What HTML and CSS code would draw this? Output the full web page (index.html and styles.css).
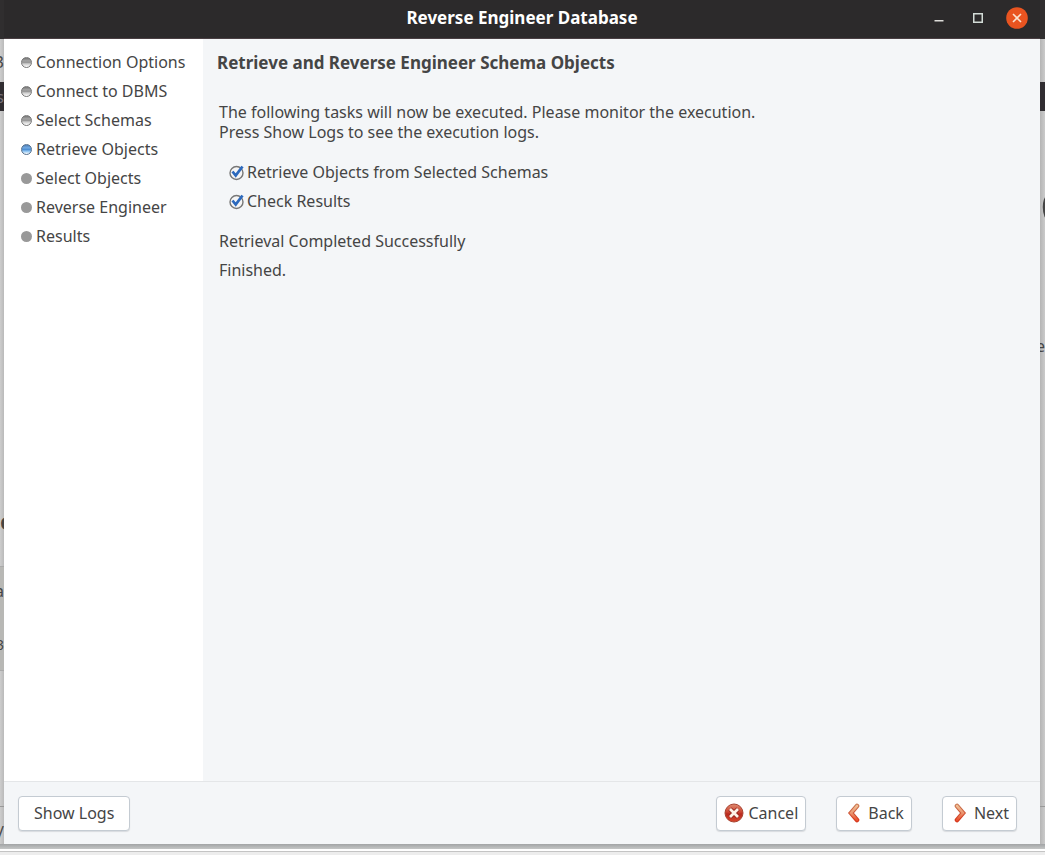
FILE: index.html
```html
<!DOCTYPE html>
<html lang="en">
<head>
    <meta charset="UTF-8">
    <meta name="viewport" content="width=device-width, initial-scale=1.0">
    <title>Reverse Engineer Database</title>
    <link rel="stylesheet" href="styles.css">
</head>
<body>
    <div class="desktop">
        <div class="edge edge-left" aria-hidden="true">
            <span class="edge-text edge-number">3</span>
            <span class="edge-bar">s</span>
            <span class="edge-text edge-heading">c</span>
            <div class="edge-panel">
                <span class="edge-text">a</span>
                <span class="edge-text edge-small">3</span>
            </div>
            <div class="edge-foot">
                <span class="edge-text">/</span>
            </div>
        </div>

        <div class="dialog" role="dialog" aria-labelledby="dialog-title">
            <header class="titlebar">
                <h1 class="title" id="dialog-title">Reverse Engineer Database</h1>
                <div class="window-controls">
                    <button class="control" type="button" aria-label="Minimize">
                        <svg width="22" height="22" viewBox="0 0 22 22"><path d="M6.500 13.750h9" stroke="#deddda" stroke-width="1.500"/></svg>
                    </button>
                    <button class="control" type="button" aria-label="Maximize">
                        <svg width="22" height="22" viewBox="0 0 22 22"><rect x="6.75" y="6.75" width="8.5" height="8.5" fill="none" stroke="#d3dcd7" stroke-width="1.5"/></svg>
                    </button>
                    <button class="control" type="button" aria-label="Close">
                        <svg width="22" height="22" viewBox="0 0 22 22"><circle cx="11" cy="11" r="10.8" fill="#e95420"/><path d="M7 7l8 8M15 7l-8 8" stroke="#fbe3d0" stroke-width="1.6"/></svg>
                    </button>
                </div>
            </header>

            <div class="content">
                <nav class="sidebar">
                    <ol class="steps">
                        <li class="step done">Connection Options</li>
                        <li class="step done">Connect to DBMS</li>
                        <li class="step done">Select Schemas</li>
                        <li class="step current">Retrieve Objects</li>
                        <li class="step">Select Objects</li>
                        <li class="step">Reverse Engineer</li>
                        <li class="step">Results</li>
                    </ol>
                </nav>
                <main class="page">
                    <h2 class="page-title">Retrieve and Reverse Engineer Schema Objects</h2>
                    <div class="page-body">
                        <p class="intro">The following tasks will now be executed. Please monitor the execution.<br>Press Show Logs to see the execution logs.</p>
                        <div class="tasks">
                            <label class="task">
                                <input class="task-check" type="checkbox" checked>
                                Retrieve Objects from Selected Schemas
                            </label>
                            <label class="task">
                                <input class="task-check" type="checkbox" checked>
                                Check Results
                            </label>
                        </div>
                        <p class="status">Retrieval Completed Successfully</p>
                        <p class="status">Finished.</p>
                    </div>
                </main>
            </div>

            <footer class="actions">
                <button class="button" type="button">Show Logs</button>
                <div class="actions-right">
                    <button class="button button-icon" type="button">
                        <svg width="20" height="20" viewBox="0 0 20 20">
                            <defs>
                                <linearGradient id="red" x1="0" y1="0" x2="0" y2="1">
                                    <stop offset="0" stop-color="#de8b70"/>
                                    <stop offset=".45" stop-color="#cc4532"/>
                                    <stop offset=".55" stop-color="#b82a20"/>
                                    <stop offset="1" stop-color="#d9472c"/>
                                </linearGradient>
                            </defs>
                            <circle cx="10" cy="10" r="9" fill="url(#red)" stroke="#a94432"/>
                            <path d="M6 6l8 8M14 6l-8 8" stroke="#8f2018" stroke-width="4.4"/>
                            <path d="M6 6l8 8M14 6l-8 8" stroke="#fff3e8" stroke-width="2.8"/>
                        </svg>
                        Cancel
                    </button>
                    <button class="button button-icon" type="button">
                        <svg width="20" height="20" viewBox="0 0 20 20">
                            <defs>
                                <linearGradient id="rim" x1="0" y1="0" x2="0" y2="1">
                                    <stop offset="0" stop-color="#c9744f"/>
                                    <stop offset="1" stop-color="#d4351c"/>
                                </linearGradient>
                                <linearGradient id="orange" x1="0" y1="0" x2="0" y2="1">
                                    <stop offset="0" stop-color="#f0bd93"/>
                                    <stop offset=".5" stop-color="#eb9670"/>
                                    <stop offset="1" stop-color="#e9502c"/>
                                </linearGradient>
                            </defs>
                            <path d="M13 3l-6 7 6 7" fill="none" stroke="url(#rim)" stroke-width="4.600" stroke-linecap="round"/>
                            <path d="M13 3l-6 7 6 7" fill="none" stroke="url(#orange)" stroke-width="2.600" stroke-linecap="round"/>
                        </svg>
                        Back
                    </button>
                    <button class="button button-icon" type="button">
                        <svg width="20" height="20" viewBox="0 0 20 20">
                            <path d="M7 3l6 7-6 7" fill="none" stroke="url(#rim)" stroke-width="4.600" stroke-linecap="round"/>
                            <path d="M7 3l6 7-6 7" fill="none" stroke="url(#orange)" stroke-width="2.600" stroke-linecap="round"/>
                        </svg>
                        Next
                    </button>
                </div>
            </footer>
        </div>

        <div class="edge edge-right" aria-hidden="true">
            <span class="edge-bar"></span>
            <span class="edge-text edge-logo">C</span>
            <span class="edge-text edge-letter">e</span>
            <div class="edge-foot"></div>
        </div>
    </div>
</body>
</html>
```

FILE: styles.css
```css
*, *::before {
    box-sizing: border-box;
}
body {
    margin: 0;
    font-family: "Noto Sans", "Open Sans", sans-serif;
    font-size: 16px;
    line-height: 20px;
    color: #454545;
    background-color: #e9e9e9;
}
h1, h2, p, ol {
    margin: 0;
    padding: 0;
}
button {
    font: inherit;
    color: inherit;
}
svg {
    display: block;
}

/* Windows behind the dialog */
.desktop {
    display: grid;
    grid-template-columns: 4px 1fr 5px;
    height: 100vh;
    padding-bottom: 11px;
    overflow: hidden;
    background: linear-gradient(to top, #ededed 3px, #c4c4c4 3px, #c4c4c4 4px, #fff 4px, #fff 6px, #c4c6c6 6px, #a2a4a5 11px, #c6c6c6 11px);
}
.edge {
    display: flex;
    flex-direction: column;
    min-width: 0;
    overflow: hidden;
    border-top: 39px solid #302e2f;
    background: linear-gradient(to right, #cdcdcd, #bababa);
}
.edge-right {
    background: linear-gradient(to right, #b5b5b5, #cbcbcb);
}
.edge-text {
    display: flex;
    justify-content: flex-end;
    flex-shrink: 0;
}
.edge-number {
    margin: 13px 0 10px;
}
.edge-bar {
    display: flex;
    justify-content: flex-end;
    align-items: center;
    flex-shrink: 0;
    height: 29px;
    color: #77727a;
    background-color: #302d31;
}
.edge-heading {
    justify-content: flex-start;
    margin-top: 400px;
    font-size: 24px;
    font-weight: bold;
}
.edge-panel {
    display: flex;
    flex-direction: column;
    gap: 34px;
    height: 105px;
    margin-top: 35px;
    padding-top: 14px;
    border: solid #aaa;
    border-width: 1px 0;
    background-color: #b8b8b5;
}
.edge-small {
    font-size: 14px;
}
.edge-foot {
    flex-shrink: 0;
    height: 38px;
    margin-top: auto;
    padding-top: 15px;
    border-top: 1px solid #999;
}
.edge-right .edge-bar {
    margin-top: 43px;
}
.edge-logo {
    justify-content: flex-start;
    margin-top: 70px;
    font-size: 50px;
    font-weight: bold;
    line-height: 50px;
}
.edge-letter {
    margin-top: 105px;
}

.dialog {
    display: flex;
    flex-direction: column;
    min-width: 0;
    background-color: #f4f6f8;
}
.titlebar {
    display: grid;
    grid-template-columns: 1fr auto 1fr;
    align-items: center;
    height: 39px;
    padding: 0 12px 3px;
    color: #fff;
    background-color: #2c2a2b;
    border-bottom: 1px solid #4a3f43;
}
.title {
    grid-column: 2;
    font-size: 17px;
    font-weight: bold;
}
.window-controls {
    display: flex;
    justify-content: flex-end;
    gap: 17px;
}
.control {
    padding: 0;
    border: none;
    background: none;
}

.content {
    display: flex;
    flex: 1;
}
.sidebar {
    width: 199px;
    flex-shrink: 0;
    padding: 9px 0 0 17px;
    background-color: #fff;
}
.steps {
    list-style: none;
}
.step {
    display: flex;
    align-items: center;
    gap: 4px;
    line-height: 29px;
    white-space: nowrap;
}
.step::before {
    content: "";
    width: 11px;
    height: 11px;
    border-radius: 50%;
    background-color: #999;
}
.step.done::before {
    border: 1px solid #777;
    background: linear-gradient(#777, #aaa 35%, #888 45%, #ccc 65%, #fff);
}
.step.current::before {
    border: 1px solid #56708c;
    background: linear-gradient(#4f7fb8, #78b0e8 35%, #3f83cc 45%, #8fc5f2 70%, #fff);
}
.page {
    flex: 1;
    padding: 14px 14px 0;
}
.page-title {
    font-size: 17px;
    font-weight: bold;
}
.page-body {
    padding: 29px 2px 0;
}
.tasks {
    display: flex;
    flex-direction: column;
    align-items: flex-start;
    padding: 16px 10px 11px;
}
.task {
    display: flex;
    align-items: center;
    gap: 2px;
    line-height: 29px;
}
.task-check {
    appearance: none;
    width: 16px;
    height: 16px;
    margin: 0;
    background: url("data:image/svg+xml,%3Csvg xmlns='http://www.w3.org/2000/svg' viewBox='0 0 16 16'%3E%3Ccircle cx='7.500' cy='8' r='6.500' fill='%23f5f5f5' stroke='%23777' stroke-width='1.400'/%3E%3C/svg%3E");
}
.task-check:checked {
    background-image: url("data:image/svg+xml,%3Csvg xmlns='http://www.w3.org/2000/svg' viewBox='0 0 16 16'%3E%3Ccircle cx='7.500' cy='8' r='6.500' fill='%23f5f5f5' stroke='%23777' stroke-width='1.400'/%3E%3Cpath d='M3.500 6.500l3.200 4L13.500 1.500' fill='none' stroke='%232c69bd' stroke-width='2.800'/%3E%3C/svg%3E");
}
.status {
    line-height: 29px;
}

.actions {
    display: flex;
    justify-content: space-between;
    align-items: center;
    height: 63px;
    padding: 0 23px 0 14px;
    border-top: 1px solid #e4e6e8;
}
.actions-right {
    display: flex;
    gap: 30px;
}
.button {
    display: flex;
    align-items: center;
    justify-content: center;
    gap: 4px;
    height: 35px;
    padding: 0 15px;
    border: 1px solid #c4cbd2;
    border-radius: 4px;
    background-color: #fff;
    box-shadow: 0 1px 1px #d8dbde;
}
.button-icon {
    padding: 0 7px;
}
```
